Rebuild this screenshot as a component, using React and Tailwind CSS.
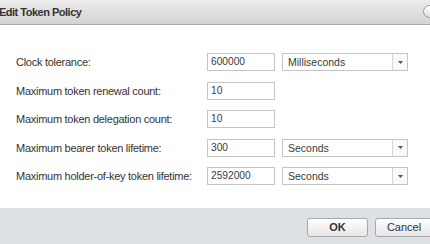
import React from "react";

const rows = [
  { label: "Clock tolerance:", value: "600000", unit: "Milliseconds" },
  { label: "Maximum token renewal count:", value: "10" },
  { label: "Maximum token delegation count:", value: "10" },
  { label: "Maximum bearer token lifetime:", value: "300", unit: "Seconds" },
  { label: "Maximum holder-of-key token lifetime:", value: "2592000", unit: "Seconds" },
];

function Select({ value }) {
  return (
    <div className="flex h-[18px] w-[126px] border border-[#c4c4c4] bg-white">
      <div className="flex-1 pl-[5px] text-[10.5px] leading-[16px] text-[#3a3a3a]">{value}</div>
      <div className="flex w-[15px] items-center justify-center border-l border-[#d4d4d4] bg-[#fafafa]">
        <svg width="5" height="3" viewBox="0 0 5 3">
          <path d="M0 0h5L2.5 3z" fill="#555" />
        </svg>
      </div>
    </div>
  );
}

export default function App() {
  return (
    <div className="flex h-[244px] w-[430px] flex-col overflow-hidden bg-white font-['Liberation_Sans',Arial,sans-serif] text-[11px]">
      {/* header */}
      <div className="relative flex h-[25px] shrink-0 items-center border-b border-[#a9a9a9] bg-gradient-to-b from-[#ececec] to-[#d3d3d3]">
        <span className="-ml-[1px] text-[11px] font-bold tracking-[-0.5px] text-[#333]">Edit Token Policy</span>
        <div className="absolute right-[-6px] top-[5px] h-[13px] w-[13px] rounded-full border border-[#9a9a9a] bg-gradient-to-b from-white to-[#dcdcdc]" />
      </div>

      {/* body */}
      <div className="flex-1 pl-[16px] pt-[28px]">
        <div className="grid grid-cols-[184px_68px_126px] auto-rows-[28.5px] gap-x-[7px]">
          {rows.map((r) => (
            <React.Fragment key={r.label}>
              <div className="pt-[3px] leading-[12px] tracking-[-0.27px] text-[#333]">{r.label}</div>
              <div className="h-[18px] w-[68px] border border-[#c4c4c4] bg-white pl-[3px] text-[10.2px] leading-[16px] text-[#3a3a3a]">
                {r.value}
              </div>
              <div>{r.unit && <Select value={r.unit} />}</div>
            </React.Fragment>
          ))}
        </div>
      </div>

      {/* footer */}
      <div className="flex h-[36px] shrink-0 items-start justify-end gap-[7px] bg-[#dde1e6] pt-[10px]">
        <button className="h-[19px] w-[61px] rounded-[3px] border border-[#a8a8a8] bg-gradient-to-b from-white to-[#e6e6e6] text-[11px] font-bold leading-[17px] text-[#333]">
          OK
        </button>
        <button className="-mr-[3px] h-[19px] w-[58px] rounded-[3px] border border-[#a8a8a8] bg-gradient-to-b from-white to-[#e6e6e6] text-[11px] leading-[17px] text-[#333]">
          Cancel
        </button>
      </div>
    </div>
  );
}
